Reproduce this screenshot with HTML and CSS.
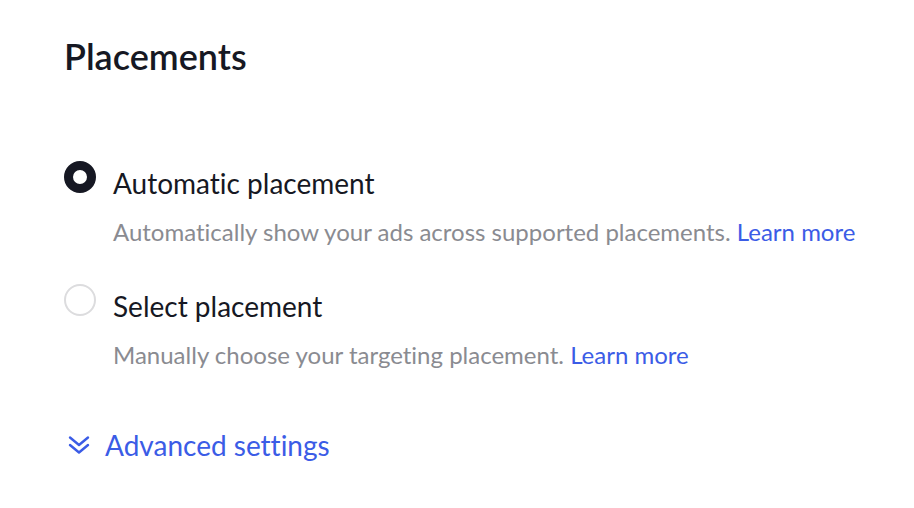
FILE: index.html
```html
<!DOCTYPE html>
<html lang="en">
<head>
<meta charset="utf-8">
<title>Placements</title>
<link rel="stylesheet" href="styles.css">
</head>
<body>
<main class="panel">
  <h1 class="title">Placements</h1>
  <div class="options">
    <div class="option">
      <span class="radio radio-checked"></span>
      <div class="option-body">
        <div class="option-label">Automatic placement</div>
        <div class="option-desc">Automatically show your ads across supported placements. <a class="link" href="#">Learn more</a></div>
      </div>
    </div>
    <div class="option">
      <span class="radio"></span>
      <div class="option-body">
        <div class="option-label">Select placement</div>
        <div class="option-desc">Manually choose your targeting placement. <a class="link" href="#">Learn more</a></div>
      </div>
    </div>
  </div>
  <a class="advanced" href="#">
    <svg class="advanced-icon" viewBox="0 0 22 22" width="22" height="22" aria-hidden="true">
      <path d="M2 3.5 L11 11 L20 3.5 M2 11 L11 18.5 L20 11" fill="none" stroke="currentColor" stroke-width="2.4" stroke-linecap="round" stroke-linejoin="round"/>
    </svg>
    <span>Advanced settings</span>
  </a>
</main>
</body>
</html>
```
FILE: styles.css
```css
html, body {
  margin: 0;
  padding: 0;
  background: #ffffff;
}
body {
  font-family: "Lato", "Liberation Sans", sans-serif;
  font-variant-ligatures: none;
  color: #161823;
}
.panel {
  padding: 30px 24px 0 64px;
}
.title {
  margin: 0;
  font-size: 36px;
  font-weight: 600;
  line-height: 52px;
  color: #161823;
}
.options {
  display: flex;
  flex-direction: column;
  gap: 38px;
  margin-top: 83px;
}
.option {
  display: flex;
  align-items: flex-start;
  gap: 17px;
}
.radio {
  flex: none;
  box-sizing: border-box;
  width: 32px;
  height: 32px;
  margin-top: -4px;
  border-radius: 50%;
  border: 2px solid #dcdcde;
  background: #fff;
}
.radio-checked {
  border: 9px solid #161823;
}
.option-label {
  font-size: 28px;
  line-height: 36px;
}
.option-desc {
  margin-top: 13px;
  font-size: 24px;
  line-height: 36px;
  color: #8a8b91;
  white-space: nowrap;
}
.link {
  color: #3b5ce6;
  text-decoration: none;
}
.advanced {
  display: inline-flex;
  align-items: center;
  gap: 15px;
  margin-top: 54px;
  margin-left: 4px;
  color: #3b5ce6;
  text-decoration: none;
  font-size: 28px;
  line-height: 36px;
}
.advanced-icon {
  flex: none;
}
```
